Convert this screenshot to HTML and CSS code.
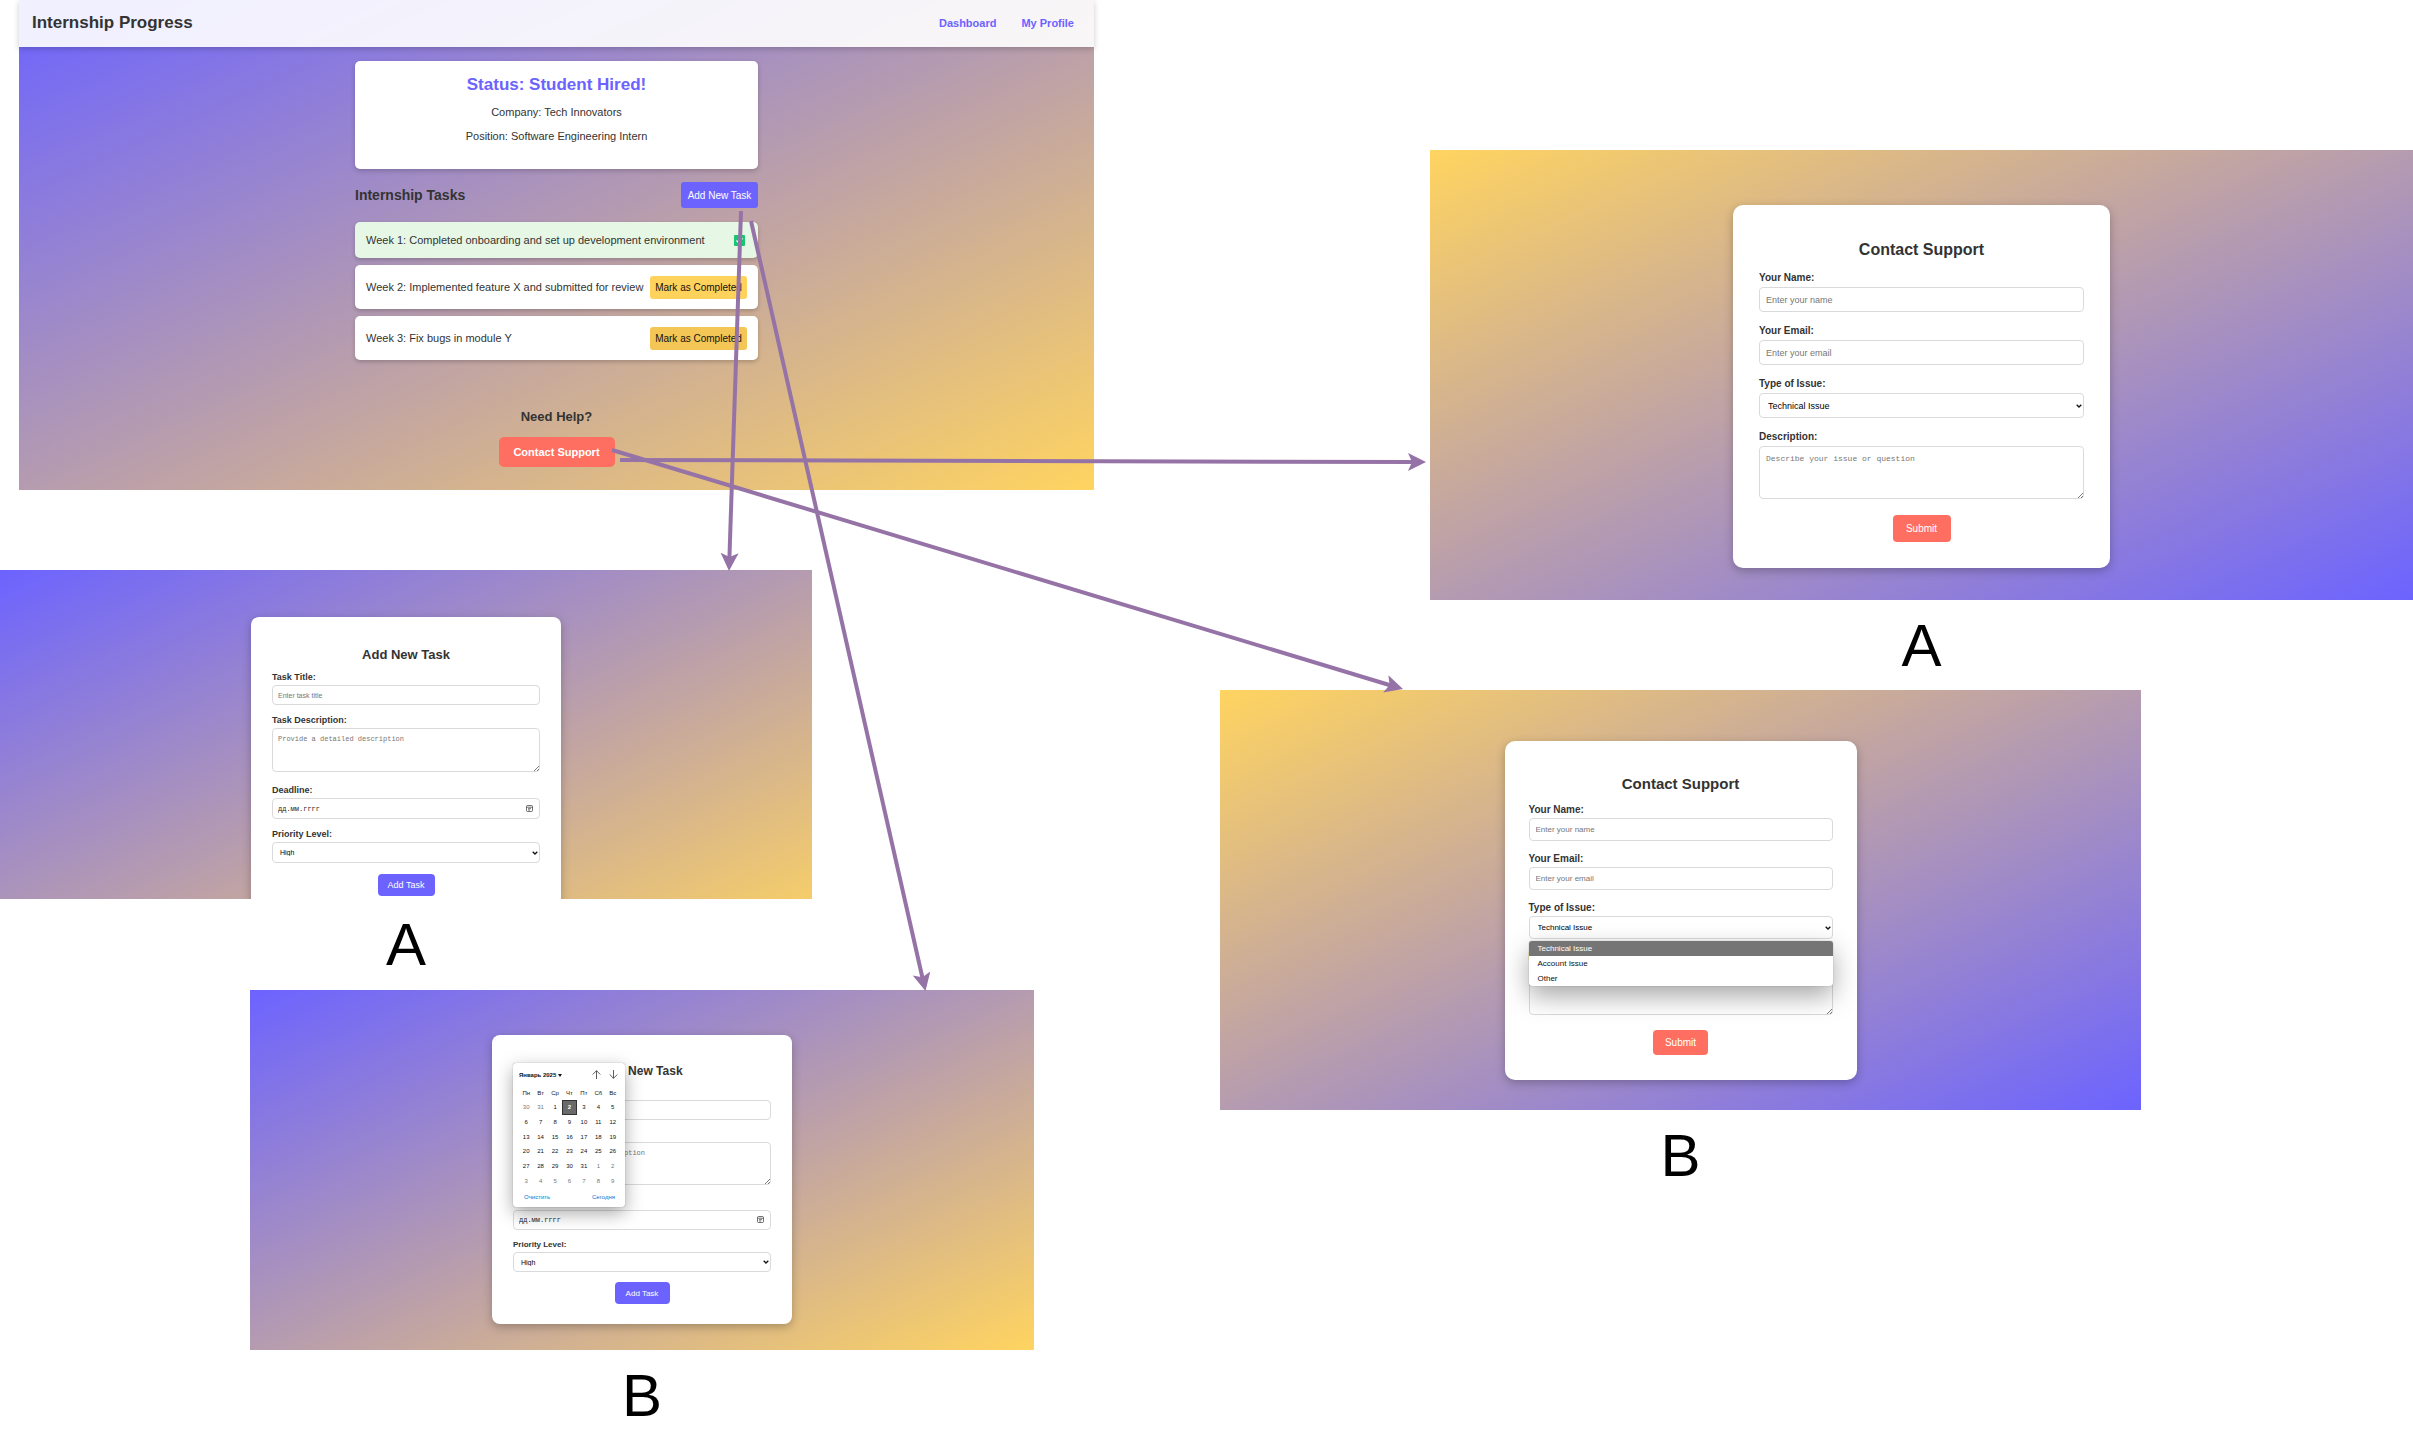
FILE: index.html
```html
<!DOCTYPE html>
<html lang="en">
<head>
<meta charset="utf-8">
<title>Internship Progress flow</title>
<link rel="stylesheet" href="styles.css">
</head>
<body>
<main class="board">

  <section class="frame frame-progress cool">
    <header class="topbar">
      <h1 class="topbar-title">Internship Progress</h1>
      <nav class="topbar-nav">
        <a href="#dashboard">Dashboard</a>
        <a href="#profile">My Profile</a>
      </nav>
    </header>
    <div class="column">
      <div class="status">
        <h2 class="status-title">Status: Student Hired!</h2>
        <p>Company: Tech Innovators</p>
        <p>Position: Software Engineering Intern</p>
      </div>
      <div class="tasks-head">
        <h2 class="tasks-title">Internship Tasks</h2>
        <button class="btn-add" type="button">Add New Task</button>
      </div>
      <ul class="tasks">
        <li class="task done">
          <span>Week 1: Completed onboarding and set up development environment</span>
          <svg class="check" viewBox="0 0 11 11" role="img" aria-label="Completed"><rect width="11" height="11" rx="1" fill="#16c670"/><path d="M2.5 5.5 4.6 7.6 8.6 3.4" fill="none" stroke="#fff" stroke-width="1.3"/></svg>
        </li>
        <li class="task">
          <span>Week 2: Implemented feature X and submitted for review</span>
          <button class="btn-mark" type="button">Mark as Completed</button>
        </li>
        <li class="task">
          <span>Week 3: Fix bugs in module Y</span>
          <button class="btn-mark active" type="button">Mark as Completed</button>
        </li>
      </ul>
      <div class="help">
        <h3 class="help-title">Need Help?</h3>
        <button class="btn-contact" type="button">Contact Support</button>
      </div>
    </div>
  </section>

  <figure class="node node-task-a">
    <div class="frame cool clipped">
      <form class="card task-large">
        <h2>Add New Task</h2>
        <div class="field">
          <label for="a-title">Task Title:</label>
          <div class="control"><input id="a-title" type="text" placeholder="Enter task title"></div>
        </div>
        <div class="field">
          <label for="a-desc">Task Description:</label>
          <div class="control area">
            <textarea id="a-desc" placeholder="Provide a detailed description"></textarea>
            <svg class="grip" viewBox="0 0 5 5"><path d="M0 5 5 0M3 5 5 3"/></svg>
          </div>
        </div>
        <div class="field after-area">
          <label for="a-date">Deadline:</label>
          <div class="control tall">
            <input class="date" id="a-date" type="text" value="дд.мм.гггг">
            <svg class="cal-icon" viewBox="0 0 7 7"><rect x=".5" y=".5" width="6" height="6" rx="1"/><path d="M.5 2.2h6M2 3.7h3M2 5h2"/></svg>
          </div>
        </div>
        <div class="field">
          <label for="a-priority">Priority Level:</label>
          <div class="control tall">
            <select id="a-priority"><option>High</option><option>Medium</option><option>Low</option></select>
            <svg class="chevron" viewBox="0 0 6 4"><path d="M.7.7 3 3 5.3.7"/></svg>
          </div>
        </div>
        <button class="submit violet" type="button">Add Task</button>
      </form>
    </div>
    <figcaption>A</figcaption>
  </figure>

  <figure class="node node-task-b">
    <div class="frame cool">
      <form class="card task-small">
        <h2>Add New Task</h2>
        <div class="field">
          <label for="b-title">Task Title:</label>
          <div class="control"><input id="b-title" type="text"></div>
        </div>
        <div class="field">
          <label for="b-desc">Task Description:</label>
          <div class="control area">
            <textarea id="b-desc" placeholder="Provide a detailed description"></textarea>
            <svg class="grip" viewBox="0 0 5 5"><path d="M0 5 5 0M3 5 5 3"/></svg>
          </div>
        </div>
        <div class="field after-area">
          <label for="b-date">Deadline:</label>
          <div class="control">
            <input class="date" id="b-date" type="text" value="дд.мм.гггг">
            <svg class="cal-icon" viewBox="0 0 7 7"><rect x=".5" y=".5" width="6" height="6" rx="1"/><path d="M.5 2.2h6M2 3.7h3M2 5h2"/></svg>
            <div class="picker">
              <div class="picker-head">
                <strong>Январь 2025 <svg class="caret" viewBox="0 0 4 3"><path d="M0 0h4L2 3z"/></svg></strong>
                <span class="picker-arrows">
                  <svg viewBox="0 0 9 9"><path d="M4.500 9V.7M.7 4.500 4.500.7 8.300 4.500"/></svg>
                  <svg viewBox="0 0 9 9"><path d="M4.500 0v8.300M.7 4.500 4.500 8.300 8.300 4.500"/></svg>
                </span>
              </div>
              <table>
                <thead><tr><th>Пн</th><th>Вт</th><th>Ср</th><th>Чт</th><th>Пт</th><th>Сб</th><th>Вс</th></tr></thead>
                <tbody>
                  <tr><td class="out">30</td><td class="out">31</td><td>1</td><td class="today">2</td><td>3</td><td>4</td><td>5</td></tr>
                  <tr><td>6</td><td>7</td><td>8</td><td>9</td><td>10</td><td>11</td><td>12</td></tr>
                  <tr><td>13</td><td>14</td><td>15</td><td>16</td><td>17</td><td>18</td><td>19</td></tr>
                  <tr><td>20</td><td>21</td><td>22</td><td>23</td><td>24</td><td>25</td><td>26</td></tr>
                  <tr><td>27</td><td>28</td><td>29</td><td>30</td><td>31</td><td class="out">1</td><td class="out">2</td></tr>
                  <tr><td class="out">3</td><td class="out">4</td><td class="out">5</td><td class="out">6</td><td class="out">7</td><td class="out">8</td><td class="out">9</td></tr>
                </tbody>
              </table>
              <div class="picker-foot">
                <button type="button">Очистить</button>
                <button type="button">Сегодня</button>
              </div>
            </div>
          </div>
        </div>
        <div class="field">
          <label for="b-priority">Priority Level:</label>
          <div class="control">
            <select id="b-priority"><option>High</option><option>Medium</option><option>Low</option></select>
            <svg class="chevron" viewBox="0 0 6 4"><path d="M.7.7 3 3 5.3.7"/></svg>
          </div>
        </div>
        <button class="submit violet" type="button">Add Task</button>
      </form>
    </div>
    <figcaption>B</figcaption>
  </figure>

  <figure class="node node-support-a">
    <div class="frame warm">
      <form class="card support-large">
        <h2>Contact Support</h2>
        <div class="field">
          <label for="c-name">Your Name:</label>
          <div class="control"><input id="c-name" type="text" placeholder="Enter your name"></div>
        </div>
        <div class="field">
          <label for="c-email">Your Email:</label>
          <div class="control"><input id="c-email" type="email" placeholder="Enter your email"></div>
        </div>
        <div class="field">
          <label for="c-type">Type of Issue:</label>
          <div class="control">
            <select id="c-type"><option>Technical Issue</option><option>Account Issue</option><option>Other</option></select>
            <svg class="chevron" viewBox="0 0 6 4"><path d="M.7.7 3 3 5.3.7"/></svg>
          </div>
        </div>
        <div class="field">
          <label for="c-desc">Description:</label>
          <div class="control area">
            <textarea id="c-desc" placeholder="Describe your issue or question"></textarea>
            <svg class="grip" viewBox="0 0 5 5"><path d="M0 5 5 0M3 5 5 3"/></svg>
          </div>
        </div>
        <button class="submit coral" type="button">Submit</button>
      </form>
    </div>
    <figcaption>A</figcaption>
  </figure>

  <figure class="node node-support-b">
    <div class="frame warm">
      <form class="card support-small">
        <h2>Contact Support</h2>
        <div class="field">
          <label for="d-name">Your Name:</label>
          <div class="control"><input id="d-name" type="text" placeholder="Enter your name"></div>
        </div>
        <div class="field">
          <label for="d-email">Your Email:</label>
          <div class="control"><input id="d-email" type="email" placeholder="Enter your email"></div>
        </div>
        <div class="field">
          <label for="d-type">Type of Issue:</label>
          <div class="control">
            <select id="d-type"><option>Technical Issue</option><option>Account Issue</option><option>Other</option></select>
            <svg class="chevron" viewBox="0 0 6 4"><path d="M.7.7 3 3 5.3.7"/></svg>
            <ul class="options" role="listbox" aria-label="Type of Issue">
              <li class="selected" role="option" aria-selected="true">Technical Issue</li>
              <li role="option">Account Issue</li>
              <li role="option">Other</li>
            </ul>
          </div>
        </div>
        <div class="field">
          <label for="d-desc">Description:</label>
          <div class="control area">
            <textarea id="d-desc"></textarea>
            <svg class="grip" viewBox="0 0 5 5"><path d="M0 5 5 0M3 5 5 3"/></svg>
          </div>
        </div>
        <button class="submit coral" type="button">Submit</button>
      </form>
    </div>
    <figcaption>B</figcaption>
  </figure>

  <svg class="arrows" width="2413" height="1430" viewBox="0 0 2413 1430" aria-hidden="true">
    <defs>
      <marker id="head" markerUnits="userSpaceOnUse" markerWidth="20" markerHeight="20" refX="18" refY="10" orient="auto">
        <path d="M18 10 0 1 4 10 0 19z" fill="#9673a6"/>
      </marker>
    </defs>
    <g fill="none" stroke="#9673a6" stroke-width="4">
      <path d="M741 211 729.400 558"/><path d="M751 221 922.500 978"/>
      <path d="M620 460 1414 462"/><path d="M612 450 1391 685.500"/>
    </g>
    <g stroke="none" fill="none">
      <path d="M741 211 729 571" marker-end="url(#head)"/><path d="M751 221 925.500 991" marker-end="url(#head)"/>
      <path d="M620 460 1426 462" marker-end="url(#head)"/><path d="M612 450 1403 689" marker-end="url(#head)"/>
    </g>
  </svg>
</main>
</body>
</html>
```
FILE: styles.css
```css
* { box-sizing: border-box; }

body, h1, h2, h3, p, ul, figure { margin: 0; padding: 0; }

body {
  background: #fff;
  color: #333;
  font-family: "Liberation Sans", Arial, sans-serif;
}

button, input, select, textarea { font-family: inherit; }
button { border: 0; padding: 0; cursor: pointer; }
ul { list-style: none; }

/* Canvas that the screens are placed on */
.board { position: relative; min-height: 100vh; overflow: hidden; }
.node, .frame-progress, .arrows { position: absolute; }
.arrows { left: 0; top: 0; pointer-events: none; }

.frame-progress { left: 19px; top: 0; width: 1075px; min-height: 490px; }
.node-task-a { left: 0; top: 570px; width: 812px; }
.node-task-b { left: 250px; top: 990px; width: 784px; }
.node-support-a { left: 1430px; top: 150px; width: 983px; }
.node-support-b { left: 1220px; top: 690px; width: 921px; }

.cool { background: linear-gradient(to bottom right, #6c63ff, #ffd460); }
.warm { background: linear-gradient(to bottom right, #ffd460, #6c63ff); }

.node .frame { display: flex; justify-content: center; align-items: flex-start; }
.node-task-a .frame { height: 329px; padding-top: 47px; overflow: hidden; background-size: 100% 380px; }
.node-task-b .frame { min-height: 360px; padding-top: 45px; }
.node-support-a .frame { min-height: 450px; padding-top: 55px; }
.node-support-b .frame { min-height: 420px; padding-top: 51px; }

figcaption {
  margin-top: 12px;
  color: #000;
  font-size: 60px;
  line-height: 68px;
  text-align: center;
}

/* Progress screen */
.topbar {
  display: flex;
  align-items: center;
  justify-content: space-between;
  height: 47px;
  padding: 0 12px 2px 13px;
  background: rgba(255, 255, 255, .9);
  box-shadow: 0 2px 6px rgba(0, 0, 0, .2);
}
.topbar-title { font-size: 17px; line-height: 20px; }
.topbar-nav { display: flex; gap: 9px; }
.topbar-nav a {
  padding: 0 8px;
  color: #6c63ff;
  font-size: 11px;
  font-weight: bold;
  line-height: 14px;
  text-decoration: none;
}
.column { width: 403px; max-width: 100%; margin: 0 auto; padding-top: 14px; }
.status {
  display: grid;
  gap: 11px;
  padding: 14px 12px 26px;
  border-radius: 5px;
  background: #fff;
  box-shadow: 0 2px 5px rgba(0, 0, 0, .2);
  font-size: 11px;
  line-height: 13px;
  text-align: center;
}
.status-title { color: #6c63ff; font-size: 17px; line-height: 20px; }
.tasks-head {
  display: flex;
  align-items: center;
  justify-content: space-between;
  margin: 13px 0 14px;
}
.tasks-title { font-size: 14px; line-height: 16px; }
.btn-add {
  width: 77px;
  height: 26px;
  border-radius: 3px;
  background: #6c63ff;
  color: #fff;
  font-size: 10px;
}
.tasks { display: grid; gap: 7px; }
.task {
  display: flex;
  align-items: center;
  justify-content: space-between;
  min-height: 44px;
  padding: 0 11px;
  border-radius: 5px;
  background: #fff;
  box-shadow: 0 2px 4px rgba(0, 0, 0, .2);
  font-size: 11px;
  line-height: 14px;
}
.task.done { min-height: 36px; background: #e6f7e6; }
.check { width: 11px; height: 11px; margin-right: 2px; }
.btn-mark {
  width: 97px;
  height: 23px;
  border-radius: 3px;
  background: #ffd25c;
  color: #111;
  font-size: 10px;
}
.btn-mark.active { background: #f3c656; }
.help { display: grid; justify-items: center; gap: 13px; margin-top: 49px; }
.help-title { font-size: 13px; line-height: 15px; }
.btn-contact {
  width: 116px;
  height: 30px;
  border-radius: 5px;
  background: #ff6f61;
  color: #fff;
  font-size: 11px;
  font-weight: bold;
}

/* Form cards: each size sets its own measures */
.card {
  flex: none;
  display: flex;
  flex-direction: column;
  width: var(--card);
  padding: var(--top) var(--side) var(--bottom);
  border-radius: var(--radius);
  background: #fff;
  box-shadow: 0 3px 10px rgba(0, 0, 0, .25);
}
.task-large {
  --card: 310px; --top: 30px; --side: 21px; --bottom: 22px; --radius: 8px;
  --title: 13px; --title-line: 15px; --label: 9px; --label-line: 10px; --text: 7px; --mono: 7px;
  --control: 20px; --area: 44px; --gap: 10px; --inset: 5px;
  --btn-w: 57px; --btn-h: 22px; --btn-text: 9px; --btn-gap: 11px;
}
.task-small {
  --card: 300px; --top: 29px; --side: 21px; --bottom: 20px; --radius: 8px;
  --title: 12px; --title-line: 14px; --label: 8px; --label-line: 9px; --text: 7px; --mono: 7px;
  --control: 20px; --area: 43px; --gap: 10px; --inset: 5px;
  --btn-w: 55px; --btn-h: 22px; --btn-text: 8px; --btn-gap: 10px;
}
.support-large {
  --card: 377px; --top: 36px; --side: 26px; --bottom: 26px; --radius: 10px;
  --title: 16px; --title-line: 18px; --label: 10px; --label-line: 12px; --text: 9px; --mono: 8px;
  --control: 25px; --area: 53px; --gap: 13px; --inset: 6px;
  --btn-w: 58px; --btn-h: 27px; --btn-text: 10px; --btn-gap: 16px;
}
.support-small {
  --card: 352px; --top: 34px; --side: 24px; --bottom: 25px; --radius: 10px;
  --title: 15px; --title-line: 17px; --label: 10px; --label-line: 11px; --text: 8px; --mono: 8px;
  --control: 23px; --area: 50px; --gap: 12px; --inset: 6px;
  --btn-w: 55px; --btn-h: 25px; --btn-text: 10px; --btn-gap: 15px;
}
.card h2 { font-size: var(--title); line-height: var(--title-line); text-align: center; }
.field { display: grid; gap: 3px; margin-top: var(--gap); }
.field.after-area { margin-top: 13px; }
.field label { font-size: var(--label); font-weight: bold; line-height: var(--label-line); }
.control { position: relative; height: var(--control); }
.control.tall { height: 21px; }
.control.area { height: var(--area); }
.control input, .control select, .control textarea {
  display: block;
  width: 100%;
  height: 100%;
  margin: 0;
  padding: 0 var(--inset);
  border: 1px solid #dadadc;
  border-radius: 4px;
  outline: 0;
  appearance: none;
  background: #fff;
  color: #222;
  font-size: var(--text);
}
.control select { padding-left: calc(var(--inset) + 2px); color: #000; }
.control textarea {
  padding-top: calc(var(--inset) + 1px);
  font-family: "Liberation Mono", monospace;
  font-size: var(--mono);
  resize: none;
}
.control .date { font-family: "Liberation Mono", monospace; font-size: var(--mono); }
.control ::placeholder { color: #777; opacity: 1; }
.grip, .chevron, .cal-icon { position: absolute; fill: none; pointer-events: none; }
.grip { right: 1px; bottom: 1px; width: 5px; height: 5px; stroke: #555; stroke-width: .8; }
.chevron { right: 2px; top: calc(50% - 2px); width: 6px; height: 4px; stroke: #111; stroke-width: 1.3; }
.cal-icon { right: 7px; top: calc(50% - 4px); width: 7px; height: 7px; stroke: #333; stroke-width: .7; }
.submit {
  align-self: center;
  width: var(--btn-w);
  height: var(--btn-h);
  margin-top: var(--btn-gap);
  border-radius: 4px;
  color: #fff;
  font-size: var(--btn-text);
}
.violet { background: #6c63ff; }
.coral { background: #ff6f61; }

/* Date picker */
.picker {
  position: absolute;
  z-index: 1;
  left: 0;
  bottom: calc(100% + 3px);
  width: 112px;
  height: 144px;
  padding: 0 5px 0 6px;
  border-radius: 3px;
  background: #fff;
  box-shadow: 0 0 1px rgba(0, 0, 0, .5), 0 6px 18px rgba(0, 0, 0, .35);
  color: #111;
  font-size: 6px;
}
.picker-head { display: flex; align-items: center; justify-content: space-between; height: 23px; }
.picker-head svg { fill: none; stroke: #333; stroke-width: .8; }
.picker-head .caret { width: 4px; height: 3px; fill: #111; stroke: none; }
.picker-arrows { display: flex; gap: 8px; padding-right: 2px; }
.picker-arrows svg { width: 9px; height: 9px; }
.picker table { width: 100%; height: 102px; table-layout: fixed; border-collapse: collapse; }
.picker th, .picker td { height: 14px; padding: 0; font-weight: normal; line-height: 8px; text-align: center; }
.picker .out { color: #777; }
.picker .today { background: #6a6a6a; color: #fff; font-weight: bold; box-shadow: inset 0 0 0 1px #333; }
.picker-foot { display: flex; justify-content: space-between; padding: 3px 5px 0; }
.picker-foot button { height: 12px; background: none; color: #0078d4; font-size: 6px; }

/* Open drop-down list */
.options {
  position: absolute;
  z-index: 1;
  top: calc(100% + 2px);
  left: 0;
  right: 0;
  overflow: hidden;
  border-radius: 3px;
  background: #fff;
  box-shadow: 0 0 1px rgba(0, 0, 0, .5), 0 10px 26px rgba(0, 0, 0, .35);
  color: #111;
  font-size: 8px;
  line-height: 15px;
}
.options li { padding: 0 9px; }
.options .selected { background: #757575; color: #fff; }
```
